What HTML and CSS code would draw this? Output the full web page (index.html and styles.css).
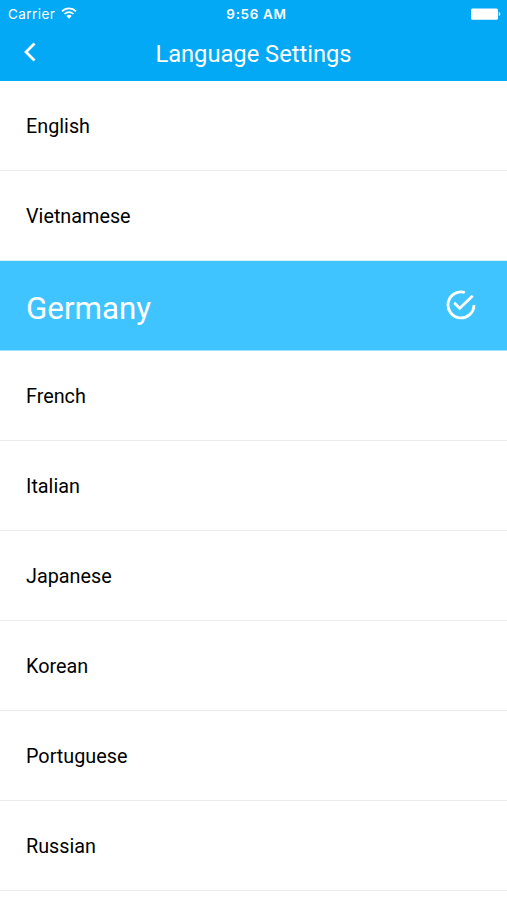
FILE: index.html
```html
<!DOCTYPE html>
<html lang="en">
<head>
<meta charset="utf-8">
<title>Language Settings</title>
<link rel="stylesheet" href="styles.css">
</head>
<body>
<header class="header">
  <div class="status">
    <div class="carrier"><span>Carrier</span>
      <svg class="wifi" viewBox="0 0 16 12"><path d="M1 4.300a10 10 0 0 1 14 0M3.500 7a6.400 6.400 0 0 1 9 0" fill="none" stroke="#fff" stroke-width="1.700"/><path d="M5.400 9a3.800 3.800 0 0 1 5.200 0L8 11.700z" fill="#fff"/></svg>
    </div>
    <time class="time">9:56 AM</time>
    <svg class="battery" viewBox="0 0 31 12"><rect x="1" y="0.500" width="27" height="11.200" rx="1.500" fill="#fff"/><path d="M28.800 4q1.600.600 1.600 2T28.800 8z" fill="#fff"/></svg>
  </div>
  <nav class="nav">
    <svg class="back" viewBox="0 0 14 22"><path d="M11.500 2.500L3 11l8.500 8.500" fill="none" stroke="#fff" stroke-width="2.800"/></svg>
    <h1 class="title">Language Settings</h1>
  </nav>
</header>
<ul class="list">
  <li class="row">English</li>
  <li class="row">Vietnamese</li>
  <li class="row selected"><span>Germany</span>
    <svg class="check" viewBox="0 0 30 30"><path d="M18.800 2.500A13 13 0 1 0 28 15M8.200 12.800l5.500 5.500L26.700 5.700" fill="none" stroke="#fff" stroke-width="2.800"/></svg>
  </li>
  <li class="row">French</li>
  <li class="row">Italian</li>
  <li class="row">Japanese</li>
  <li class="row">Korean</li>
  <li class="row">Portuguese</li>
  <li class="row">Russian</li>
</ul>
</body>
</html>
```
FILE: styles.css
```css
* { box-sizing: border-box; }
body { margin: 0; background: #fff; color: #000; font-family: Roboto, sans-serif; }
.header { height: 81px; background: #03a9f4; color: #fff; }
.status { height: 27px; padding: 0 6px 0 8px; display: grid; grid-template-columns: 1fr auto 1fr; align-items: center; font: 13.5px Inter, sans-serif; }
.carrier { display: flex; align-items: center; gap: 6px; letter-spacing: 0.45px; }
.wifi { width: 16px; height: 12px; margin-bottom: 2px; }
.time { font-weight: 600; letter-spacing: 0.65px; margin-left: 4px; }
.battery { width: 31px; height: 12px; justify-self: end; }
.nav { height: 54px; display: grid; grid-template-columns: 60px 1fr 60px; align-items: center; }
.back { width: 14px; height: 22px; margin: 0 0 5px 23px; }
.title { margin: 0; font-size: 23.7px; font-weight: 400; text-align: center; }
.list { margin: 0; padding: 0; list-style: none; }
.row { height: 90px; padding: 2px 31px 0 26px; display: flex; align-items: center; justify-content: space-between; border-bottom: 1px solid #ececec; font-size: 19.8px; }
.row:nth-child(2) { border-color: #d4f1fd; }
.row.selected { padding-top: 5px; background: #40c4ff; border-color: #a0e1ff; color: #fff; font-size: 31.3px; }
.check { width: 30px; height: 30px; margin-bottom: 7px; }
```
